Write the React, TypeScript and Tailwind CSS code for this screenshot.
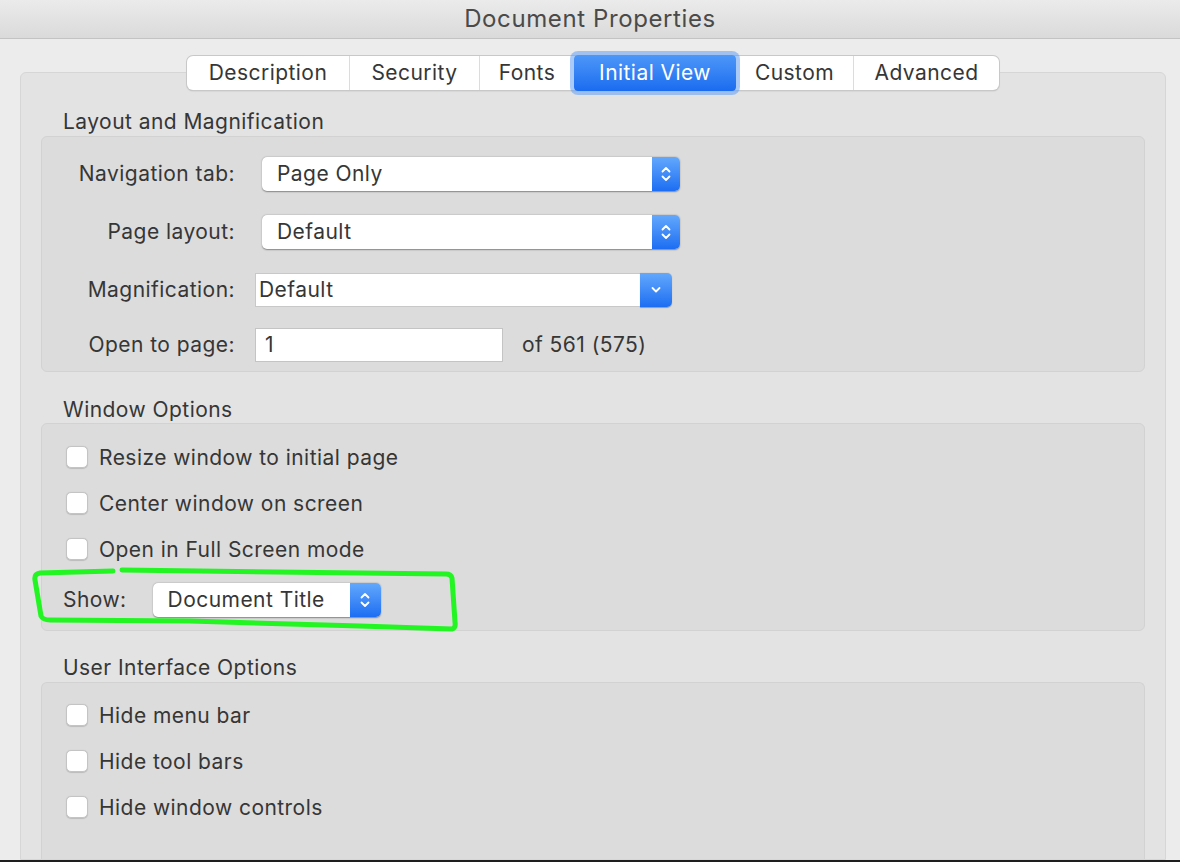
import React from "react";

function UpDown() {
  return (
    <svg width="12" height="20" viewBox="0 0 12 20" fill="none">
      <path d="M2.5 7.5 L6 4 L9.5 7.5" stroke="white" strokeWidth="1.8" strokeLinecap="round" strokeLinejoin="round" />
      <path d="M2.5 12.5 L6 16 L9.5 12.5" stroke="white" strokeWidth="1.8" strokeLinecap="round" strokeLinejoin="round" />
    </svg>
  );
}

function Down() {
  return (
    <svg width="12" height="10" viewBox="0 0 12 10" fill="none">
      <path d="M2.5 3 L6 6.5 L9.5 3" stroke="white" strokeWidth="1.8" strokeLinecap="round" strokeLinejoin="round" />
    </svg>
  );
}

const txt = "text-[21px] tracking-[0.45px] text-[#363636]";

function PopUp({ w, text, pl, bw }: { w: string; text: string; pl: string; bw: string }) {
  return (
    <div className={`flex h-[34px] ${w} rounded-[5px] bg-white shadow-[0_0.5px_1.5px_rgba(0,0,0,0.4)] overflow-hidden`}>
      <div className={`flex-1 flex items-center ${pl} ${txt}`}>{text}</div>
      <div className={`${bw} flex items-center justify-center bg-linear-to-b from-[#62a8fc] to-[#1c6df2]`}>
        <UpDown />
      </div>
    </div>
  );
}

function Check({ label }: { label: string }) {
  return (
    <div className="flex items-center h-[22px]">
      <div className="w-[22px] h-[22px] shrink-0 rounded-[5px] bg-white border border-[#c4c4c4] shadow-[0_0.5px_1px_rgba(0,0,0,0.15)]" />
      <span className={`ml-[11px] leading-[22px] pt-[1px] ${txt}`}>{label}</span>
    </div>
  );
}

const tabs = [
  { t: "Description", w: "w-[163px]" },
  { t: "Security", w: "w-[130px]" },
  { t: "Fonts", w: "w-[94px]" },
  { t: "Initial View", w: "w-[162px]", sel: true },
  { t: "Custom", w: "w-[118px]" },
  { t: "Advanced", w: "w-[145px]" },
];

export default function App() {
  return (
    <div className="relative w-[1180px] h-[862px] overflow-hidden bg-[#ececec] font-['Inter','Noto_Sans',sans-serif] flex flex-col">
      <div className="h-[860px] overflow-hidden flex flex-col">
        {/* title bar */}
        <div className="h-[39px] shrink-0 bg-linear-to-b from-[#ebebeb] to-[#dadada] border-b border-[#c3c3c3] flex items-center justify-center">
          <span className="text-[24px] tracking-[0.6px] text-[#4a4a4a] leading-none">Document Properties</span>
        </div>

        {/* tabs */}
        <div className="relative z-10 mt-[17px] ml-[20px] w-[1146px] flex justify-center">
          <div className="flex h-[34px] rounded-[6px] bg-white shadow-[0_0_0_1px_#c8c8c8,0_1px_1.5px_rgba(0,0,0,0.25)]">
            {tabs.map((tb, i) =>
              tb.sel ? (
                <div
                  key={i}
                  className={`${tb.w} -my-[1px] h-[36px] flex items-center justify-center rounded-[4px] bg-linear-to-b from-[#4d97f8] to-[#1a6bf0] text-white text-[21px] tracking-[0.45px] shadow-[0_0_0_4px_rgba(100,160,245,0.55)]`}
                >
                  {tb.t}
                </div>
              ) : (
                <div
                  key={i}
                  className={`${tb.w} flex items-center justify-center ${txt} ${
                    i < tabs.length - 1 && !tabs[i + 1].sel ? "border-r border-[#dcdcdc]" : ""
                  }`}
                >
                  {tb.t}
                </div>
              )
            )}
          </div>
        </div>

        {/* outer box */}
        <div className="-mt-[18px] ml-[20px] w-[1146px] flex-1 flex flex-col rounded-t-[6px] border border-[#d6d6d6] bg-[#e3e3e3] px-[20px] pt-[37px]">
          <div className={`h-[24px] leading-[24px] pl-[22px] ${txt}`}>Layout and Magnification</div>
          <div className="mt-[2px] h-[236px] rounded-[6px] border border-[#d2d2d2] bg-[#dcdcdc] pt-[20px] flex flex-col">
            <div className="flex items-center h-[34px]">
              <div className={`w-[193px] text-right ${txt}`}>Navigation tab:</div>
              <div className="ml-[27px]">
                <PopUp w="w-[418px]" text="Page Only" pl="pl-[15px]" bw="w-[28px]" />
              </div>
            </div>
            <div className="flex items-center h-[34px] mt-[24px]">
              <div className={`w-[193px] text-right ${txt}`}>Page layout:</div>
              <div className="ml-[27px]">
                <PopUp w="w-[418px]" text="Default" pl="pl-[15px]" bw="w-[28px]" />
              </div>
            </div>
            <div className="flex items-center h-[34px] mt-[24px]">
              <div className={`w-[193px] text-right ${txt}`}>Magnification:</div>
              <div className="ml-[20px] flex h-[34px] w-[417px]">
                <div className={`flex-1 bg-white border border-[#c8c8c8] border-r-0 flex items-center pl-[3px] ${txt}`}>
                  Default
                </div>
                <div className="w-[32px] rounded-r-[5px] bg-linear-to-b from-[#62a8fc] to-[#1c6df2] flex items-center justify-center shadow-[0_0.5px_1px_rgba(0,0,0,0.3)]">
                  <Down />
                </div>
              </div>
            </div>
            <div className="flex items-center h-[34px] mt-[21px]">
              <div className={`w-[193px] text-right ${txt}`}>Open to page:</div>
              <div className={`ml-[20px] w-[248px] h-[34px] bg-white border border-[#c4c4c4] flex items-center pl-[9px] ${txt}`}>
                1
              </div>
              <div className={`ml-[19px] ${txt}`}>of 561 (575)</div>
            </div>
          </div>

          <div className={`mt-[25px] h-[24px] leading-[24px] pl-[22px] pt-[1px] ${txt}`}>Window Options</div>
          <div className="mt-[2px] h-[208px] rounded-[6px] border border-[#d2d2d2] bg-[#dcdcdc] pt-[22px] flex flex-col">
            <div className="pl-[24px] flex flex-col gap-[24px]">
              <Check label="Resize window to initial page" />
              <Check label="Center window on screen" />
              <Check label="Open in Full Screen mode" />
            </div>
            <div className="mt-[23px] pl-[21px] flex items-center h-[34px]">
              <span className={txt}>Show:</span>
              <div className="ml-[26px]">
                <PopUp w="w-[228px]" text="Document Title" pl="pl-[15px]" bw="w-[31px]" />
              </div>
            </div>
          </div>

          <div className={`mt-[24px] h-[24px] leading-[24px] pl-[22px] pt-[1px] ${txt}`}>User Interface Options</div>
          <div className="mt-[3px] flex-1 rounded-t-[6px] border border-b-0 border-[#d2d2d2] bg-[#dcdcdc] pt-[21px] pl-[24px] flex flex-col gap-[24px]">
            <Check label="Hide menu bar" />
            <Check label="Hide tool bars" />
            <Check label="Hide window controls" />
          </div>
        </div>
      </div>
      <div className="h-[2px] bg-[#1e1e1e]" />

      {/* green annotation */}
      <svg className="absolute left-0 top-0 pointer-events-none" width="1180" height="862" viewBox="0 0 1180 862" fill="none">
        <path
          d="M113 571 L40 573 Q34 574 35 580 L41 616 Q43 620 50 620 L190 621 L360 626 L452 629 Q456 628 455 622 L452 578 Q451 574 446 574 L122 570"
          stroke="#22f522"
          strokeWidth="5"
          strokeLinecap="round"
          strokeLinejoin="round"
        />
      </svg>
    </div>
  );
}
